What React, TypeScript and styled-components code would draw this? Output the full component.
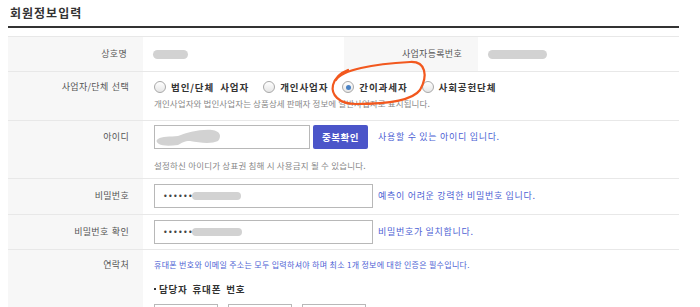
import React from "react";
import styled, { createGlobalStyle } from "styled-components";

const Global = createGlobalStyle`
  html, body { margin: 0; padding: 0; background: #fff; }
  body { font-family: "Noto Sans CJK KR", "Noto Sans", sans-serif; color: #333; }
`;

const Page = styled.div`
  width: 671px;
  margin-left: 8px;
  position: relative;
`;

const Title = styled.h2`
  margin: 0;
  height: 26px;
  line-height: 26px;
  padding-left: 2px;
  font-size: 12px;
  font-weight: 700;
  letter-spacing: 1px;
  color: #333;
  border-bottom: 2px solid #333;
  margin-bottom: 8px;
`;

const Table = styled.div`
  display: flex;
  flex-direction: column;
`;

const Row = styled.div<{ $cols?: string }>`
  display: grid;
  grid-template-columns: ${(p) => p.$cols || "135px 1fr"};
  border-top: 1px solid #e8e8e8;
`;

const Label = styled.div<{ $pt?: number; $lh?: number; $center?: boolean }>`
  background: #f7f7f7;
  text-align: right;
  padding-right: ${(p) => (p.$center ? 16 : 14)}px;
  padding-top: ${(p) => p.$pt ?? 0}px;
  line-height: ${(p) => p.$lh ?? 12}px;
  font-size: 9px;
  letter-spacing: 0.3px;
  word-spacing: 1px;
  color: #555;
  ${(p) => (p.$center ? "display:flex;align-items:center;justify-content:flex-end;" : "")}
`;

const Value = styled.div<{ $pt?: number; $pb?: number; $center?: boolean }>`
  padding: ${(p) => p.$pt ?? 0}px 0 ${(p) => p.$pb ?? 0}px 11px;
  display: flex;
  flex-direction: column;
  ${(p) => (p.$center ? "justify-content:center;height:34px;" : "")}
`;

const Line = styled.div<{ $mt?: number; $h?: number }>`
  display: flex;
  align-items: center;
  margin-top: ${(p) => p.$mt ?? 0}px;
  height: ${(p) => p.$h ?? 12}px;
`;

const Blob = styled.span<{ $w: number; $h?: number }>`
  display: inline-block;
  width: ${(p) => p.$w}px;
  height: ${(p) => p.$h ?? 9}px;
  border-radius: 6px;
  background: #d2d2d2;
  margin-left: -1px;
`;

const RadioItem = styled.label`
  display: flex;
  align-items: center;
  margin-right: 14px;
  font-size: 9.5px;
  font-weight: 700;
  letter-spacing: 0.9px;
  word-spacing: 3px;
  color: #333;
  white-space: nowrap;
`;

const RadioCircle = styled.span<{ $on?: boolean }>`
  box-sizing: border-box;
  width: 12px;
  height: 12px;
  border-radius: 50%;
  border: 1px solid #a8a8a8;
  background: linear-gradient(#ffffff, #e6e6e6);
  margin-right: 5px;
  display: flex;
  align-items: center;
  justify-content: center;
  &::after {
    content: "";
    display: ${(p) => (p.$on ? "block" : "none")};
    width: 5px;
    height: 5px;
    border-radius: 50%;
    background: #4a82c4;
  }
`;

const Help = styled.div<{ $mt?: number; $ls?: number }>`
  margin-top: ${(p) => p.$mt ?? 0}px;
  line-height: 12px;
  font-size: 8.5px;
  letter-spacing: ${(p) => p.$ls ?? 0.1}px;
  color: #888;
  white-space: nowrap;
`;

const Msg = styled.span<{ $ml?: number; $small?: boolean }>`
  margin-left: ${(p) => p.$ml ?? 0}px;
  font-size: ${(p) => (p.$small ? 8 : 9)}px;
  letter-spacing: ${(p) => (p.$small ? 0.3 : 0.7)}px;
  color: #4d5fd4;
  white-space: nowrap;
  line-height: 12px;
`;

const Input = styled.div<{ $w: number }>`
  box-sizing: border-box;
  width: ${(p) => p.$w}px;
  height: 24px;
  border: 1px solid #b8b8b8;
  background: #fff;
  display: flex;
  align-items: center;
  padding-left: 8px;
  flex: none;
`;

const Dots = styled.span`
  font-family: "DejaVu Sans", sans-serif;
  font-size: 8px;
  color: #444;
  letter-spacing: 0.3px;
`;

const Button = styled.button`
  width: 55px;
  height: 24px;
  margin-left: 3px;
  border: none;
  border-radius: 2px;
  background: #4b55c9;
  color: #fff;
  font-family: inherit;
  font-size: 9.5px;
  font-weight: 700;
  letter-spacing: 0.5px;
  padding: 0;
`;

const Bullet = styled.div`
  margin-top: 12px;
  line-height: 12px;
  font-size: 9.5px;
  font-weight: 700;
  color: #333;
  letter-spacing: 0.8px;
  word-spacing: 2px;
  display: flex;
  align-items: center;
  &::before {
    content: "";
    width: 2px;
    height: 2px;
    background: #333;
    margin-right: 3px;
  }
`;

const Phones = styled.div`
  display: flex;
  gap: 10px;
  margin-top: 9px;
`;

const Mark = styled.svg`
  position: absolute;
  left: -8px;
  top: 0;
  pointer-events: none;
`;

export default function App() {
  return (
    <>
      <Global />
      <Page>
        <Title>회원정보입력</Title>
        <Table>
          <Row $cols="135px 201px 134px 1fr">
            <Label $center>상호명</Label>
            <Value $center>
              <Line>
                <Blob $w={35} />
              </Line>
            </Value>
            <Label $center>사업자등록번호</Label>
            <Value $center>
              <Line>
                <Blob $w={59} />
              </Line>
            </Value>
          </Row>

          <Row>
            <Label $pt={8} $lh={14}>사업자/단체 선택</Label>
            <Value $pt={8} $pb={11}>
              <Line $h={14}>
                <RadioItem><RadioCircle />법인/단체 사업자</RadioItem>
                <RadioItem><RadioCircle />개인사업자</RadioItem>
                <RadioItem><RadioCircle $on />간이과세자</RadioItem>
                <RadioItem><RadioCircle />사회공헌단체</RadioItem>
              </Line>
              <Help $mt={3}>개인사업자와 법인사업자는 상품상세 판매자 정보에 일반사업자로 표시됩니다.</Help>
            </Value>
          </Row>

          <Row>
            <Label $pt={4} $lh={24}>아이디</Label>
            <Value $pt={4} $pb={7}>
              <Line $h={24}>
                <Input $w={156}>
                  <svg width="66" height="20" viewBox="0 0 66 20" style={{ marginLeft: -7 }}>
                    <path d="M2 12 C6 9 14 10 22 9 C30 6 44 2 56 3 C64 4 66 9 62 14 C56 17 44 16 34 14 C28 14 26 16 22 18 C14 19 6 19 3 17 C0 15 0 13 2 12 Z" fill="#d2d2d2" />
                  </svg>
                </Input>
                <Button>중복확인</Button>
                <Msg $ml={10}>사용할 수 있는 아이디 입니다.</Msg>
              </Line>
              <Help $mt={10} $ls={0.2}>설정하신 아이디가 상표권 침해 시 사용금지 될 수 있습니다.</Help>
            </Value>
          </Row>

          <Row>
            <Label $pt={5} $lh={24}>비밀번호</Label>
            <Value $pt={5} $pb={6}>
              <Line $h={24}>
                <Input $w={219}>
                  <Dots>••••••</Dots>
                  <Blob $w={49} $h={8} />
                </Input>
                <Msg $ml={5}>예측이 어려운 강력한 비밀번호 입니다.</Msg>
              </Line>
            </Value>
          </Row>

          <Row>
            <Label $pt={5} $lh={24}>비밀번호 확인</Label>
            <Value $pt={5} $pb={5}>
              <Line $h={24}>
                <Input $w={219}>
                  <Dots>••••••</Dots>
                  <Blob $w={50} $h={8} />
                </Input>
                <Msg $ml={5}>비밀번호가 일치합니다.</Msg>
              </Line>
            </Value>
          </Row>

          <Row>
            <Label $pt={9} $lh={12}>연락처</Label>
            <Value $pt={9} $pb={10}>
              <Line>
                <Msg $small>휴대폰 번호와 이메일 주소는 모두 입력하셔야 하며 최소 1개 정보에 대한 인증은 필수입니다.</Msg>
              </Line>
              <Bullet>담당자 휴대폰 번호</Bullet>
              <Phones>
                <Input $w={64} />
                <Input $w={64} />
                <Input $w={64} />
              </Phones>
            </Value>
          </Row>
        </Table>
        <Mark width="700" height="307" viewBox="0 0 700 307">
          <path
            d="M336 80 C342 70 372 64 410 62 C426 61 428 76 420 90 C412 101 384 104 356 104 C338 104 331 94 333 85 C335 78 340 73 348 70"
            fill="none"
            stroke="#f2581e"
            strokeWidth="2.2"
            strokeLinecap="round"
          />
        </Mark>
      </Page>
    </>
  );
}
